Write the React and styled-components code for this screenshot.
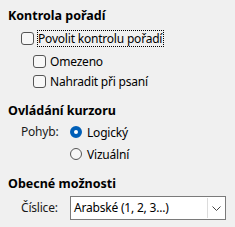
import React from "react";
import styled, { createGlobalStyle } from "styled-components";

const Global = createGlobalStyle`
  html, body {
    margin: 0;
    background: #f0f0f0;
  }
  body {
    font-family: "Noto Sans", "Liberation Sans", sans-serif;
    font-size: 12px;
    letter-spacing: -0.2px;
    color: #000;
  }
`;

const Panel = styled.div`
  width: 235px;
  height: 227px;
  box-sizing: border-box;
  padding: 8px 9px 0 8px;
  display: flex;
  flex-direction: column;
`;

const Title = styled.div`
  height: 16px;
  line-height: 16px;
  font-size: 12.5px;
  letter-spacing: 0;
  font-weight: 700;
  margin-top: ${(p) => p.$top || 0}px;
`;

const Row = styled.label`
  display: flex;
  align-items: center;
  gap: 3px;
  height: 20px;
  padding-left: ${(p) => p.$indent}px;
  margin-top: ${(p) => p.$top || 0}px;
`;

const Box = styled.span`
  width: 11px;
  height: 11px;
  border: 1px solid #555;
  border-radius: 3px;
  background: #f7f7f7;
  flex: none;
`;

const Text = styled.span`
  line-height: 15px;
  padding: 0 1px 0 0;
  border: 1px ${(p) => (p.$focus ? "dotted #000" : "solid transparent")};
  white-space: nowrap;
`;

const Grid = styled.div`
  display: grid;
  grid-template-columns: 49px 1fr;
  padding-left: 13px;
  margin-top: ${(p) => p.$top || 0}px;
  row-gap: 2px;
  align-items: center;
`;

const Label = styled.span`
  color: #1a1a1a;
  height: 20px;
  line-height: 20px;
`;

const Radio = styled.label`
  display: flex;
  align-items: center;
  gap: 5px;
  height: 20px;
  grid-column: 2;
`;

const Dot = styled.span`
  width: ${(p) => (p.$on ? 4 : 10)}px;
  height: ${(p) => (p.$on ? 4 : 10)}px;
  border-radius: 50%;
  flex: none;
  background: ${(p) => (p.$on ? "#fff" : "#f7f7f7")};
  border: ${(p) => (p.$on ? "4px solid #005fb8" : "1px solid #555")};
`;

const Select = styled.div`
  height: 24px;
  box-sizing: border-box;
  border: 1px solid #7a7a7a;
  background: #fff;
  display: flex;
  align-items: stretch;
`;

const Value = styled.span`
  flex: 1;
  line-height: 22px;
  padding-left: 3px;
  white-space: nowrap;
`;

const Arrow = styled.span`
  width: 16px;
  border-left: 1px solid #dcdcdc;
  margin: 1px 1px 1px 0;
  display: flex;
  align-items: center;
  justify-content: center;
`;

function Check({ children, indent, top, focus }) {
  return (
    <Row $indent={indent} $top={top}>
      <Box />
      <Text $focus={focus}>{children}</Text>
    </Row>
  );
}

export default function App() {
  return (
    <>
      <Global />
      <Panel>
        <Title>Kontrola pořadí</Title>
        <Check indent={13} top={4} focus>
          Povolit kontrolu pořadí
        </Check>
        <Check indent={25} top={3}>Omezeno</Check>
        <Check indent={25}>Nahradit při psaní</Check>

        <Title $top={12}>Ovládání kurzoru</Title>
        <Grid $top={3}>
          <Label>Pohyb:</Label>
          <Radio>
            <Dot $on />
            <span>Logický</span>
          </Radio>
          <Radio>
            <Dot />
            <span>Vizuální</span>
          </Radio>
        </Grid>

        <Title $top={12}>Obecné možnosti</Title>
        <Grid $top={4}>
          <Label>Číslice:</Label>
          <Select>
            <Value>Arabské (1, 2, 3...)</Value>
            <Arrow>
              <svg width="9" height="5" viewBox="0 0 9 5">
                <path d="M0.5 0.5 L4.5 4.5 L8.5 0.5" fill="none" stroke="#444" strokeWidth="1" />
              </svg>
            </Arrow>
          </Select>
        </Grid>
      </Panel>
    </>
  );
}
